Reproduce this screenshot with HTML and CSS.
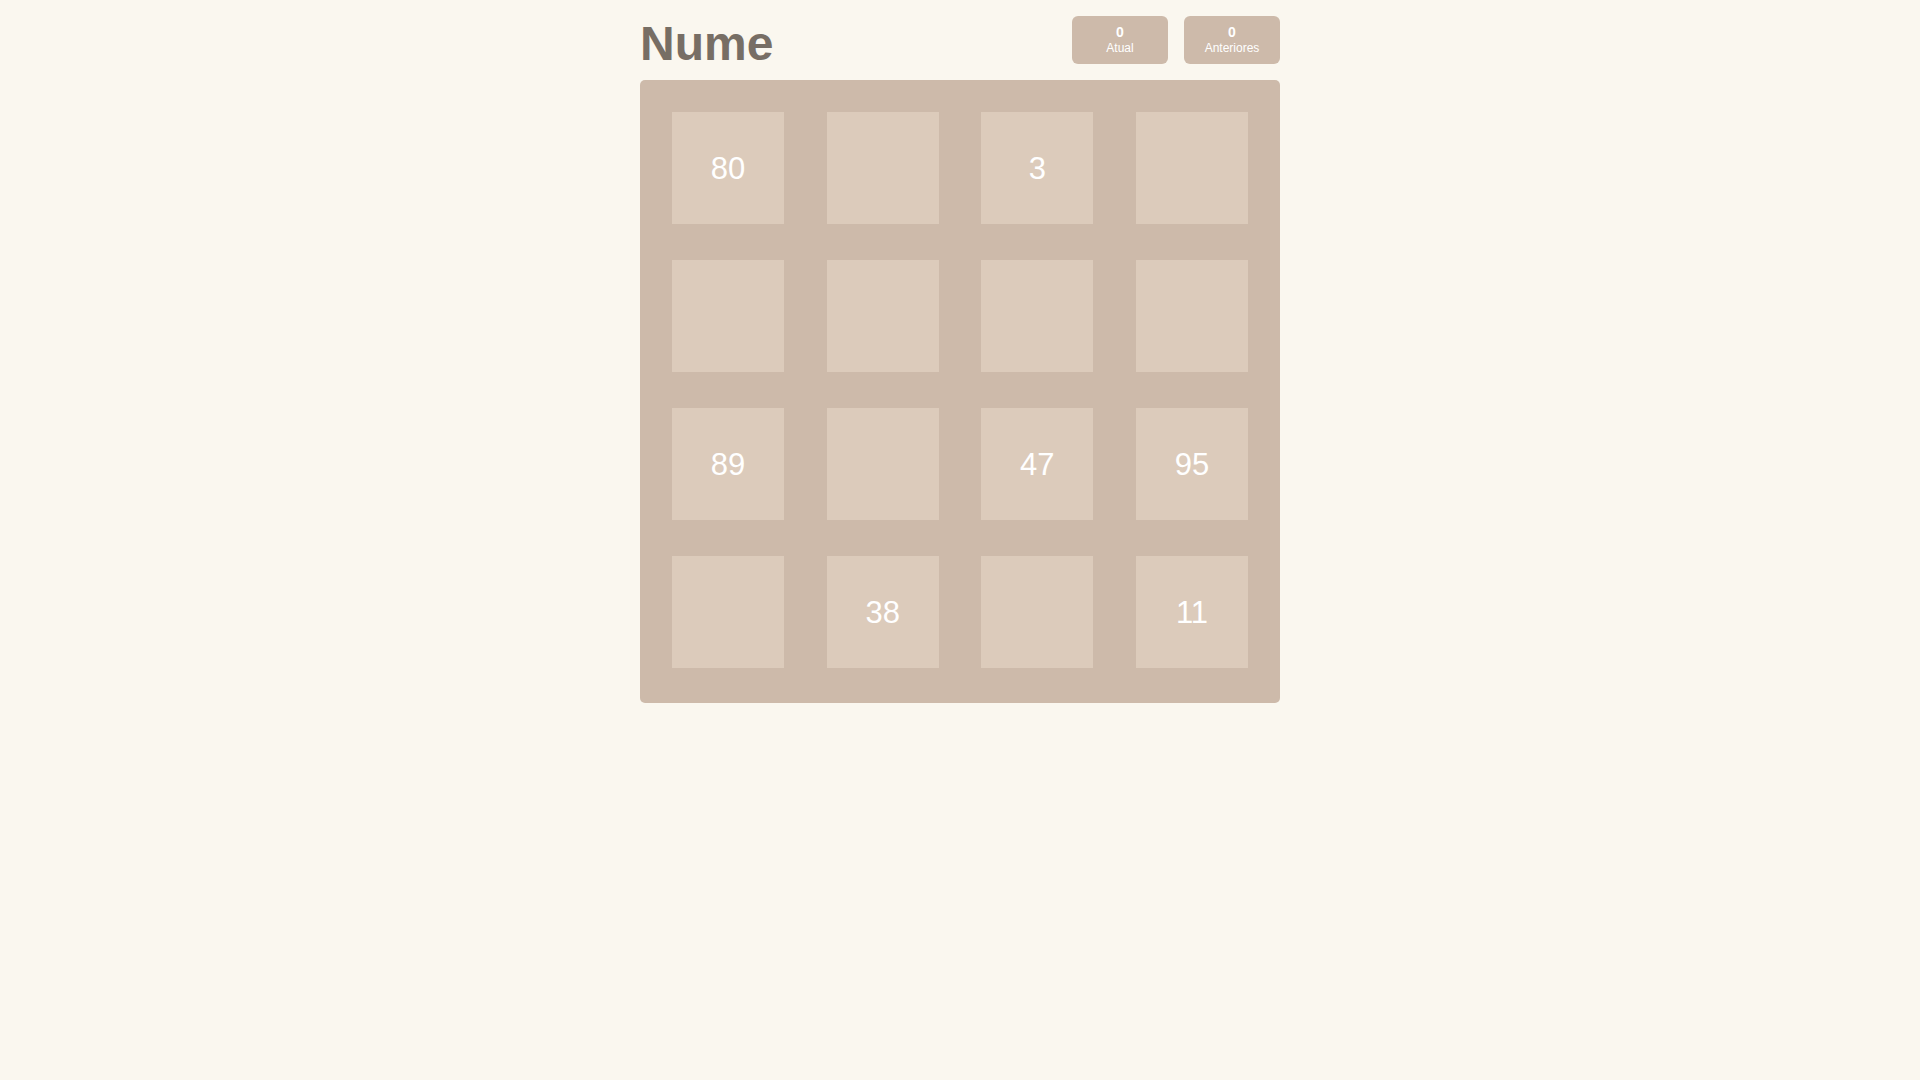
FILE: index.html
```html
<!DOCTYPE html>
<html lang="pt">
<head>
<meta charset="utf-8">
<title>Nume</title>
<link rel="stylesheet" href="styles.css">
</head>
<body>
<div class="page">
  <header class="header">
    <h1 class="title">Nume</h1>
    <div class="scores">
      <div class="score-box">
        <div class="score-value">0</div>
        <div class="score-label">Atual</div>
      </div>
      <div class="score-box">
        <div class="score-value">0</div>
        <div class="score-label">Anteriores</div>
      </div>
    </div>
  </header>
  <div class="board">
    <div class="cell">80</div>
    <div class="cell"></div>
    <div class="cell">3</div>
    <div class="cell"></div>
    <div class="cell"></div>
    <div class="cell"></div>
    <div class="cell"></div>
    <div class="cell"></div>
    <div class="cell">89</div>
    <div class="cell"></div>
    <div class="cell">47</div>
    <div class="cell">95</div>
    <div class="cell"></div>
    <div class="cell">38</div>
    <div class="cell"></div>
    <div class="cell">11</div>
  </div>
</div>
</body>
</html>
```
FILE: styles.css
```css
html, body {
  margin: 0;
  padding: 0;
}
body {
  background: #faf7ef;
  font-family: "Liberation Sans", Arial, sans-serif;
  color: #776e65;
}
.page {
  width: 640px;
  margin: 0 auto;
  padding-top: 16px;
}
.header {
  display: flex;
  justify-content: space-between;
  align-items: flex-start;
  height: 64px;
}
.title {
  margin: 0;
  font-size: 48px;
  font-weight: bold;
  line-height: normal;
  color: #776e65;
}
.scores {
  display: flex;
  gap: 16px;
}
.score-box {
  width: 96px;
  height: 48px;
  box-sizing: border-box;
  padding-top: 8px;
  background: #cdbaaa;
  border-radius: 6px;
  color: #fff;
  text-align: center;
}
.score-value {
  font-size: 14px;
  font-weight: bold;
  line-height: 16px;
}
.score-label {
  font-size: 12px;
  line-height: 14px;
  margin-top: 1px;
}
.board {
  background: #cdbaaa;
  border-radius: 5px;
  padding: 32px 32px 35px;
  display: grid;
  grid-template-columns: repeat(4, 112px);
  grid-auto-rows: 112px;
  justify-content: space-between;
  row-gap: 36px;
}
.cell {
  background: #dccbbb;
  color: #fff;
  font-size: 31px;
  padding-top: 2px;
  box-sizing: border-box;
  display: flex;
  align-items: center;
  justify-content: center;
}
```
